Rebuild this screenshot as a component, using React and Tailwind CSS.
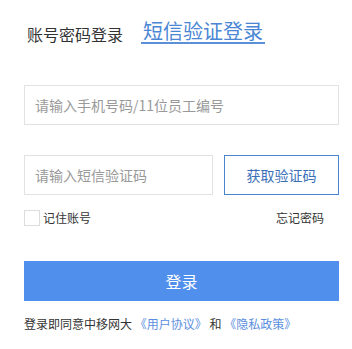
import React, { useState } from 'react';

export default function App() {
  const [remember, setRemember] = useState(false);

  return (
    <div
      className="w-[352px] h-[349px] bg-white text-[#333]"
      style={{ fontFamily: '"Noto Sans CJK SC", "Microsoft YaHei", sans-serif' }}
    >
      <div className="pl-6 w-[339px] pt-[21px]">
        {/* tabs */}
        <div className="flex items-center pl-[3px]">
          <span className="text-[16px] leading-[20px] mt-[2px] text-[#333]">账号密码登录</span>
          <span className="ml-[18px] px-[2px] text-[20px] leading-[20px] pb-[1px] border-b-2 border-[#5b8fd6] text-[#4a86d4]">
            短信验证登录
          </span>
        </div>

        {/* phone input */}
        <div className="mt-[41px] h-[40px] border border-[#e2e2e2] flex items-center pl-[10px]">
          <input
            className="w-full outline-none text-[14px] placeholder:text-[#999] bg-transparent"
            placeholder="请输入手机号码/11位员工编号"
          />
        </div>

        {/* code row */}
        <div className="mt-[30px] flex gap-[11px]">
          <div className="w-[189px] h-[40px] border border-[#e2e2e2] flex items-center pl-[10px]">
            <input
              className="w-full outline-none text-[14px] placeholder:text-[#999] bg-transparent"
              placeholder="请输入短信验证码"
            />
          </div>
          <button className="flex-1 h-[40px] border border-[#4a86cc] text-[14px] text-[#3b70b8] bg-white">
            获取验证码
          </button>
        </div>

        {/* remember / forgot */}
        <div className="mt-[14px] flex items-center justify-between pr-[15px]">
          <label className="flex items-center gap-[3px] text-[12px] text-[#333] cursor-pointer">
            <span
              onClick={() => setRemember(!remember)}
              className={`w-4 h-4 border ${remember ? 'border-[#4f8fea] bg-[#4f8fea]' : 'border-[#dcdcdc] bg-white'}`}
            />
            记住账号
          </label>
          <span className="text-[12px] text-[#333]">忘记密码</span>
        </div>

        {/* login */}
        <button className="mt-[34px] w-full h-[40px] bg-[#5090ec] text-white text-[16px]">登录</button>

        {/* agreement */}
        <p className="mt-[15px] text-[12px] leading-[16px] text-[#333] whitespace-nowrap">
          登录即同意中移网大 <span className="text-[#5b8ee0]">《用户协议》</span> 和{' '}
          <span className="text-[#5b8ee0]">《隐私政策》</span>
        </p>
      </div>
    </div>
  );
}
